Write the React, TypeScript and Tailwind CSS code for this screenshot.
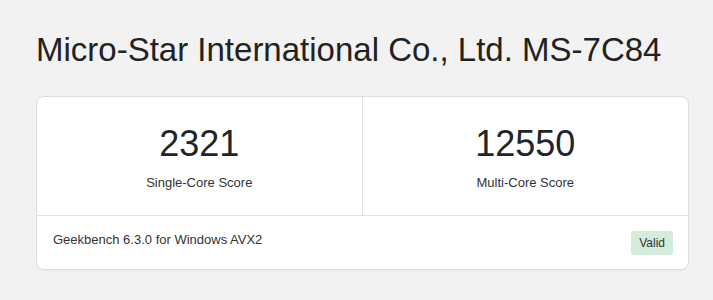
export default function App() {
  return (
    <div
      className="min-h-[300px] bg-[#f2f2f2] px-[36px] pt-[30px]"
      style={{ fontFamily: '"Liberation Sans", Arial, sans-serif' }}
    >
      <h1 className="text-[33px] leading-[40px] text-[#222] m-0">
        Micro-Star International Co., Ltd. MS-7C84
      </h1>
      <div className="mt-[26px] w-[653px] rounded-[8px] border border-[#dcdcdc] bg-white shadow-[0_1px_2px_rgba(0,0,0,0.04)]">
        <div className="grid grid-cols-2 border-b border-[#dee2e6]">
          <div className="flex flex-col items-center border-r border-[#dee2e6] pt-[25px] pb-[22px]">
            <div className="text-[36px] leading-[43px] text-[#212529]">2321</div>
            <div className="mt-[8px] text-[13px] leading-[19.5px] text-[#333]">Single-Core Score</div>
          </div>
          <div className="flex flex-col items-center pt-[25px] pb-[22px]">
            <div className="text-[36px] leading-[43px] text-[#212529]">12550</div>
            <div className="mt-[8px] text-[13px] leading-[19.5px] text-[#333]">Multi-Core Score</div>
          </div>
        </div>
        <div className="flex h-[53px] items-center justify-between pl-[16px] pr-[15px]">
          <div className="-mt-[4px] text-[13px] leading-[19.5px] text-[#333]">Geekbench 6.3.0 for Windows AVX2</div>
          <div className="mt-[1px] rounded-[3px] bg-[#d4edda] px-[8px] text-[12px] leading-[24px] text-[#333]">Valid</div>
        </div>
      </div>
    </div>
  );
}
